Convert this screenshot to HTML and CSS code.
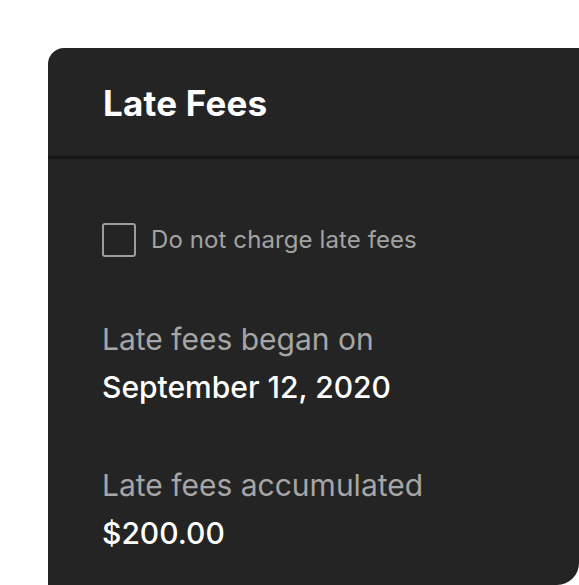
FILE: index.html
```html
<!DOCTYPE html>
<html lang="en">
	<head>
		<meta charset="utf-8">
		<meta name="viewport" content="width=device-width, initial-scale=1">
		<link rel="stylesheet" href="styles.css">
	</head>

	<body>
		<div class='card'>
		  <div class='header'>
		    <h1 class='title'>Late Fees</h1>
		  </div>
		  <div class='content'>
		    <label class='check'>
		      <span class='box'></span>
		      <span class='check-label'>Do not charge late fees</span>
		    </label>
		    <div class='field'>
		      <div class='field-label'>Late fees began on</div>
		      <div class='field-value'>September 12, 2020</div>
		    </div>
		    <div class='field'>
		      <div class='field-label'>Late fees accumulated</div>
		      <div class='field-value'>$200.00</div>
		    </div>
		  </div>
		</div>
	</body>
</html>
```

FILE: styles.css
```css
html {
	font-family: Inter, "Noto Sans", sans-serif;
	background-color: #fff;
}

body {
	margin: 0;
	padding: 48px 0 0 48px;
}

.card {
	width: 531px;
	height: 537px;
	background-color: #242424;
	border-radius: 16px 0 22px 0;
	overflow: hidden;
}

.header {
	height: 111px;
	display: flex;
	align-items: center;
	padding: 2px 55px 0;
	box-sizing: border-box;
	border-bottom: 3px solid #161616;
}

.title {
	margin: 0;
	font-size: 35px;
	font-weight: 700;
	letter-spacing: 0.2px;
	color: #fff;
	line-height: 40px;
}

.content {
	padding: 64px 54px 0;
}

.check {
	display: flex;
	align-items: center;
	height: 34px;
	margin-bottom: 58px;
}

.box {
	width: 34px;
	height: 34px;
	box-sizing: border-box;
	border: 2px solid #9c9c9c;
	border-radius: 3px;
	margin-right: 15px;
}

.check-label {
	font-size: 24px;
	letter-spacing: 0.1px;
	line-height: 34px;
	color: #a3a3a3;
}

.field {
	margin-bottom: 50px;
}

.field-label {
	font-size: 30px;
	line-height: 48px;
	color: #a6a6a6;
}

.field-value {
	font-size: 30px;
	line-height: 48px;
	font-weight: 500;
	color: #fff;
}
```
